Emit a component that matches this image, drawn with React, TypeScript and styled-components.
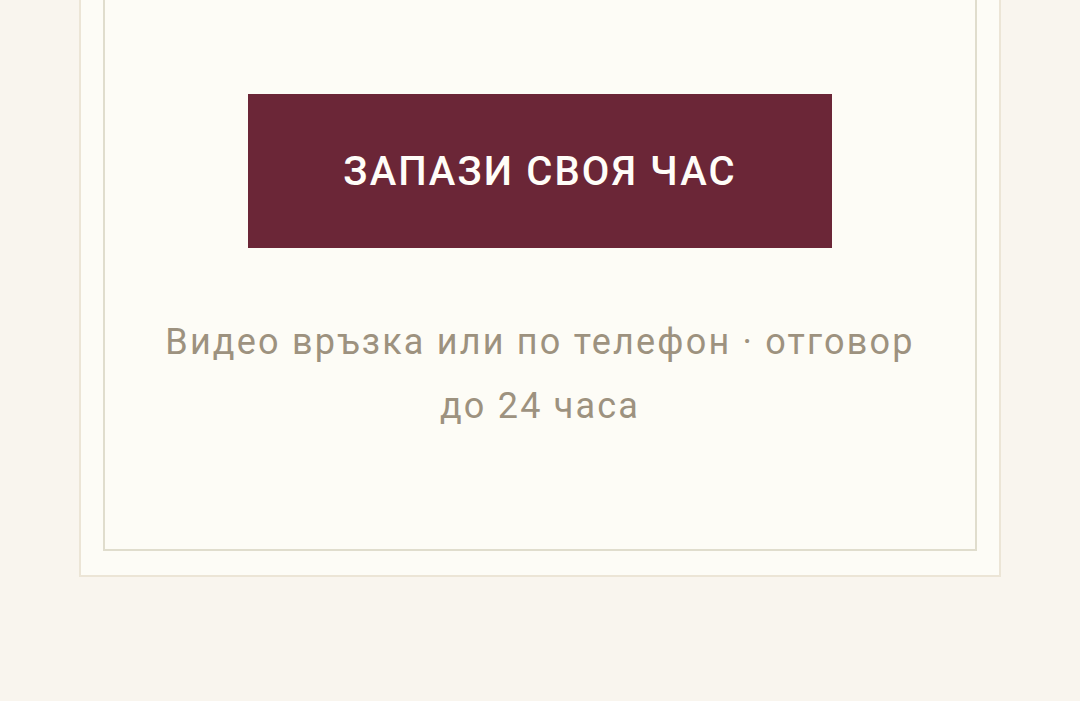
import React from 'react';
import styled, { createGlobalStyle } from 'styled-components';

const GlobalStyle = createGlobalStyle`
  html, body {
    margin: 0;
    padding: 0;
    background: #f9f5ee;
    overflow: hidden;
  }
  body {
    font-family: Roboto, "Noto Sans", sans-serif;
  }
`;

const Page = styled.main`
  height: 701px;
  display: flex;
  justify-content: center;
  align-items: flex-start;
`;

const Card = styled.section`
  width: 922px;
  box-sizing: border-box;
  margin-top: -60px;
  padding: 23px 22px 24px;
  background: #fdfcf6;
  border: 2px solid #ece5d6;
`;

const Frame = styled.div`
  box-sizing: border-box;
  padding: 127px 40px 111px;
  border: 2px solid #e0ddcd;
  display: flex;
  flex-direction: column;
  align-items: center;
`;

const BookButton = styled.button`
  width: 584px;
  height: 154px;
  border: none;
  border-radius: 0;
  background: #6b2637;
  color: #fffdf8;
  font-family: Roboto, "Noto Sans", sans-serif;
  font-size: 40px;
  font-weight: 500;
  letter-spacing: 2.1px;
  text-transform: uppercase;
  cursor: pointer;
`;

const Note = styled.p`
  margin: 62px 0 0;
  max-width: 790px;
  text-align: center;
  font-size: 36px;
  line-height: 64px;
  letter-spacing: 2.2px;
  color: #9d927f;
`;

export default function App() {
  return (
    <>
      <GlobalStyle />
      <Page>
        <Card>
          <Frame>
            <BookButton>Запази своя час</BookButton>
            <Note>Видео връзка или по телефон · отговор до 24 часа</Note>
          </Frame>
        </Card>
      </Page>
    </>
  );
}
